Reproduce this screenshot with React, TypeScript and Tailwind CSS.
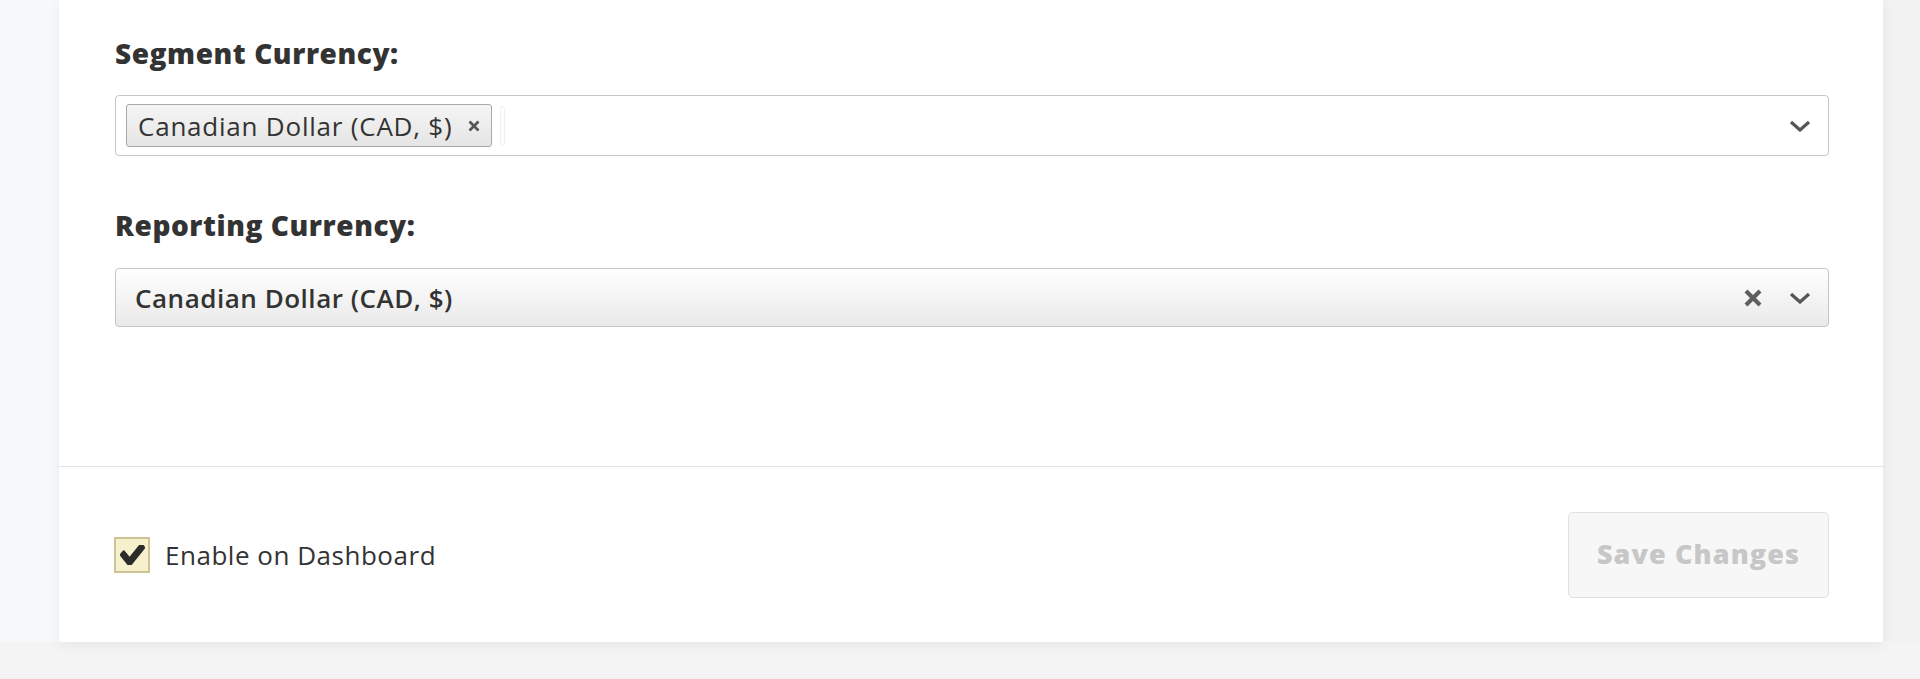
import React from 'react';

function ChevronDown() {
  return (
    <svg width="22" height="12" viewBox="0 0 22 12" className="shrink-0">
      <polyline points="2,2 11,10 20,2" fill="none" stroke="#555" strokeWidth="3.2" />
    </svg>
  );
}

function ClearIcon() {
  return (
    <svg width="18" height="18" viewBox="0 0 18 18" className="shrink-0">
      <path d="M2 2 L16 16 M16 2 L2 16" stroke="#5e5e5e" strokeWidth="4.2" />
    </svg>
  );
}

function TagRemove() {
  return (
    <svg width="12" height="12" viewBox="0 0 12 12" className="shrink-0">
      <path d="M1.5 1.5 L10.5 10.5 M10.5 1.5 L1.5 10.5" stroke="#555" strokeWidth="2.7" />
    </svg>
  );
}

function Check() {
  return (
    <svg width="25" height="20" viewBox="121 430 1550 1000" preserveAspectRatio="none">
      <path
        fill="#2b2b2b"
        d="M1671 566q0 40-28 68l-724 724-136 136q-28 28-68 28t-68-28l-136-136-362-362q-28-28-28-68t28-68l136-136q28-28 68-28t68 28l294 295 656-657q28-28 68-28t68 28l136 136q28 28 28 68z"
      />
    </svg>
  );
}

export default function App() {
  return (
    <div className="h-[679px] w-full overflow-hidden bg-[#f4f4f4] font-['Open_Sans','Liberation_Sans',sans-serif] text-[#333]">
      <div className="flex h-[642px]">
        <div className="w-[59px] shrink-0 bg-[#f5f9fc]" />

        <div className="relative z-10 flex w-[1824px] shrink-0 flex-col bg-white shadow-[0_3px_12px_rgba(0,0,0,0.06)]">
          {/* Fields */}
          <div className="flex-1 pl-[56px] pr-[54px] pt-[38px]">
            <div className="mb-[27px] text-[28px] font-extrabold leading-[30px] tracking-[0.02em] text-[#333]">
              Segment Currency:
            </div>
            <div className="flex h-[61px] items-center rounded-[4px] border border-[#c6c6c6] bg-white pl-[10px] pr-[17px]">
              <div className="flex h-[43px] items-center gap-[16px] rounded-[3px] border border-[#a9a9a9] bg-gradient-to-b from-[#f5f5f5] to-[#e5e5e5] pl-[11px] pr-[11px]">
                <span className="text-[26px] leading-none tracking-[0.03em] text-[#333]">Canadian Dollar (CAD, $)</span>
                <TagRemove />
              </div>
              <div className="ml-[8px] h-[40px] w-[5px] rounded-[3px] border border-[#f0f0f0]" />
              <div className="flex-1" />
              <ChevronDown />
            </div>

            <div className="mb-[28px] mt-[54px] text-[28px] font-extrabold leading-[30px] tracking-[0.02em] text-[#333]">
              Reporting Currency:
            </div>
            <div className="flex h-[59px] items-center rounded-[4px] border border-[#c6c6c6] bg-gradient-to-b from-white to-[#e9e9e9] pl-[19px] pr-[17px]">
              <span className="flex-1 text-[26px] font-semibold leading-none tracking-[0.02em] text-[#333]">
                Canadian Dollar (CAD, $)
              </span>
              <ClearIcon />
              <div className="w-[27px]" />
              <ChevronDown />
            </div>
          </div>

          <div className="h-px bg-[#e2e2e2]" />

          {/* Footer */}
          <div className="flex h-[175px] items-center justify-between pl-[55px] pr-[54px]">
            <label className="flex items-center gap-[15px]">
              <span className="flex h-[36px] w-[36px] items-center justify-center border-2 border-[#cdc394] bg-[#f7f0cd]">
                <Check />
              </span>
              <span className="text-[26px] leading-none tracking-[0.02em] text-[#333]">Enable on Dashboard</span>
            </label>
            <button
              disabled
              className="flex h-[86px] w-[261px] items-center justify-center rounded-[5px] border border-[#e1e1e1] bg-[#f7f7f7] text-[27px] font-extrabold tracking-[0.04em] text-[#c7c7c7]"
            >
              Save Changes
            </button>
          </div>
        </div>

        <div className="flex-1 bg-[#f2f2f2]" />
      </div>
    </div>
  );
}
